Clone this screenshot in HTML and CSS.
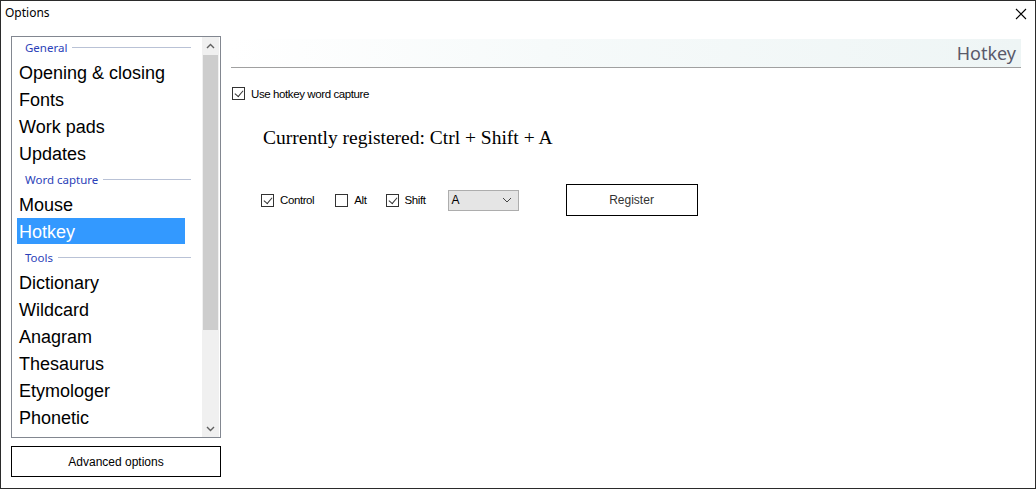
FILE: index.html
```html
<!DOCTYPE html>
<html>
<head>
<meta charset="utf-8">
<link rel="stylesheet" href="styles.css">
</head>
<body>
<div class="window">
  <div class="titlebar">
    <span class="title">Options</span>
    <svg class="close" width="12" height="12" viewBox="0 0 12 12"><path d="M1 1 L11 11 M11 1 L1 11" stroke="#000" stroke-width="1.1" fill="none"/></svg>
  </div>
  <div class="content">
    <div class="left">
      <div class="listbox">
        <div class="items">
          <div class="group first"><span>General</span><i></i></div>
          <div class="item">Opening &amp; closing</div>
          <div class="item">Fonts</div>
          <div class="item">Work pads</div>
          <div class="item">Updates</div>
          <div class="group"><span>Word capture</span><i></i></div>
          <div class="item">Mouse</div>
          <div class="item selected">Hotkey</div>
          <div class="group"><span>Tools</span><i></i></div>
          <div class="item">Dictionary</div>
          <div class="item">Wildcard</div>
          <div class="item">Anagram</div>
          <div class="item">Thesaurus</div>
          <div class="item">Etymologer</div>
          <div class="item">Phonetic</div>
        </div>
        <div class="scrollbar">
          <div class="arrow"><svg width="9" height="6" viewBox="0 0 9 6"><path d="M1 5 L4.5 1.5 L8 5" stroke="#606060" stroke-width="1.4" fill="none"/></svg></div>
          <div class="track"><div class="thumb"></div></div>
          <div class="arrow"><svg width="9" height="6" viewBox="0 0 9 6"><path d="M1 1 L4.5 4.5 L8 1" stroke="#606060" stroke-width="1.4" fill="none"/></svg></div>
        </div>
      </div>
      <div class="btn advanced">Advanced options</div>
    </div>
    <div class="right">
      <div class="panelhead"><span>Hotkey</span></div>
      <label class="check main"><span class="box checked"></span>Use hotkey word capture</label>
      <div class="registered">Currently registered: Ctrl + Shift + A</div>
      <div class="row">
        <label class="check"><span class="box checked"></span>Control</label>
        <label class="check alt"><span class="box"></span>Alt</label>
        <label class="check shift"><span class="box checked"></span>Shift</label>
        <div class="combo"><span>A</span><svg width="10" height="6" viewBox="0 0 10 6"><path d="M1 1 L5 5 L9 1" stroke="#444" stroke-width="1" fill="none"/></svg></div>
        <div class="btn register">Register</div>
      </div>
    </div>
  </div>
</div>
</body>
</html>
```
FILE: styles.css
```css
* { box-sizing: border-box; }
html, body { margin: 0; padding: 0; background: #fff; }
body { font-family: "Liberation Sans", Arial, sans-serif; }

.window {
  width: 1036px;
  height: 489px;
  border: 1px solid #2b2b2b;
  background: #fff;
  display: flex;
  flex-direction: column;
}
.titlebar {
  height: 35px;
  display: flex;
  justify-content: space-between;
  padding: 4px 8px 0 4px;
}
.title {
  font-family: "Noto Sans", "Open Sans", sans-serif;
  font-size: 12px;
  color: #000;
  line-height: 16px;
}
.close { margin-top: 3px; }

.content {
  display: flex;
  padding-left: 10px;
  flex: 1;
}
.left {
  width: 210px;
  display: flex;
  flex-direction: column;
}
.listbox {
  height: 402px;
  border: 1px solid #828790;
  display: flex;
  padding-left: 5px;
}
.items {
  width: 175px;
}
.group {
  height: 24px;
  display: flex;
  align-items: center;
  padding-left: 8px;
  padding-top: 1px;
  font-family: "Noto Sans", "Open Sans", sans-serif;
  font-size: 11.5px;
  color: #2b3fb8;
}
.group.first {
  height: 22px;
  padding-top: 0;
  padding-bottom: 1px;
}
.group span { margin-right: 5px; }
.group i {
  flex: 1;
  height: 1px;
  background: #b9c2d6;
  margin-right: 1px;
}
.item {
  height: 27px;
  line-height: 28px;
  font-size: 18px;
  padding-left: 2px;
  color: #000;
}
.item.selected {
  background: #3399ff;
  color: #fff;
  height: 26px;
  margin-bottom: 1px;
  margin-right: 7px;
}
.scrollbar {
  margin-left: auto;
  width: 17px;
  margin-right: 1px;
  background: #f0f0f0;
  display: flex;
  flex-direction: column;
}
.arrow {
  height: 17px;
  display: flex;
  align-items: center;
  justify-content: center;
}
.track { flex: 1; padding: 1px 1px; }
.thumb { height: 275px; background: #cdcdcd; }

.btn {
  border: 1px solid #000;
  display: flex;
  align-items: center;
  justify-content: center;
  font-size: 12px;
  color: #000;
  background: #fff;
}
.advanced {
  margin-top: 8px;
  height: 31px;
}

.right {
  margin-left: 10px;
  width: 790px;
  padding-top: 3px;
}
.panelhead {
  height: 29px;
  border-bottom: 1px solid #a0a0a0;
  background: linear-gradient(to right, #ffffff 0%, #f6fafa 40%, #eef5f5 100%);
  display: flex;
  align-items: center;
  justify-content: flex-end;
  padding-right: 5px;
  font-family: "Noto Sans", "Open Sans", sans-serif;
  font-size: 18px;
  color: #5a5a6a;
}
.check {
  display: flex;
  align-items: center;
  font-size: 11.5px;
  color: #000;
  letter-spacing: -0.4px;
}
.box {
  width: 13px;
  height: 13px;
  border: 1px solid #333;
  margin-right: 6px;
  position: relative;
  background: #fff;
}
.box.checked::after {
  content: "";
  position: absolute;
  left: 2px;
  top: 0px;
  width: 7px;
  height: 4px;
  border-left: 1px solid #333;
  border-bottom: 1px solid #333;
  transform: translate(0, 2px) rotate(-50deg);
  transform-origin: 50% 50%;
}
.check.main { margin-top: 19px; margin-left: 1px; }
.registered {
  margin-top: 27px;
  margin-left: 32px;
  font-family: "Liberation Serif", "DejaVu Serif", serif;
  font-size: 19.5px;
  color: #000;
}
.row {
  display: flex;
  align-items: center;
  margin-top: 35px;
  margin-left: 31px;
}
.row .check:first-child { margin-left: -1px; }
.check.alt { margin-left: 21px; }
.check.shift { margin-left: 19px; }
.combo {
  margin-left: 22px;
  width: 71px;
  height: 21px;
  border: 1px solid #adadad;
  background: #e5e5e5;
  display: flex;
  align-items: center;
  justify-content: space-between;
  padding: 0 6px 0 3px;
  font-size: 12px;
}
.register {
  margin-left: 47px;
  width: 132px;
  height: 32px;
  color: #333;
}
```
